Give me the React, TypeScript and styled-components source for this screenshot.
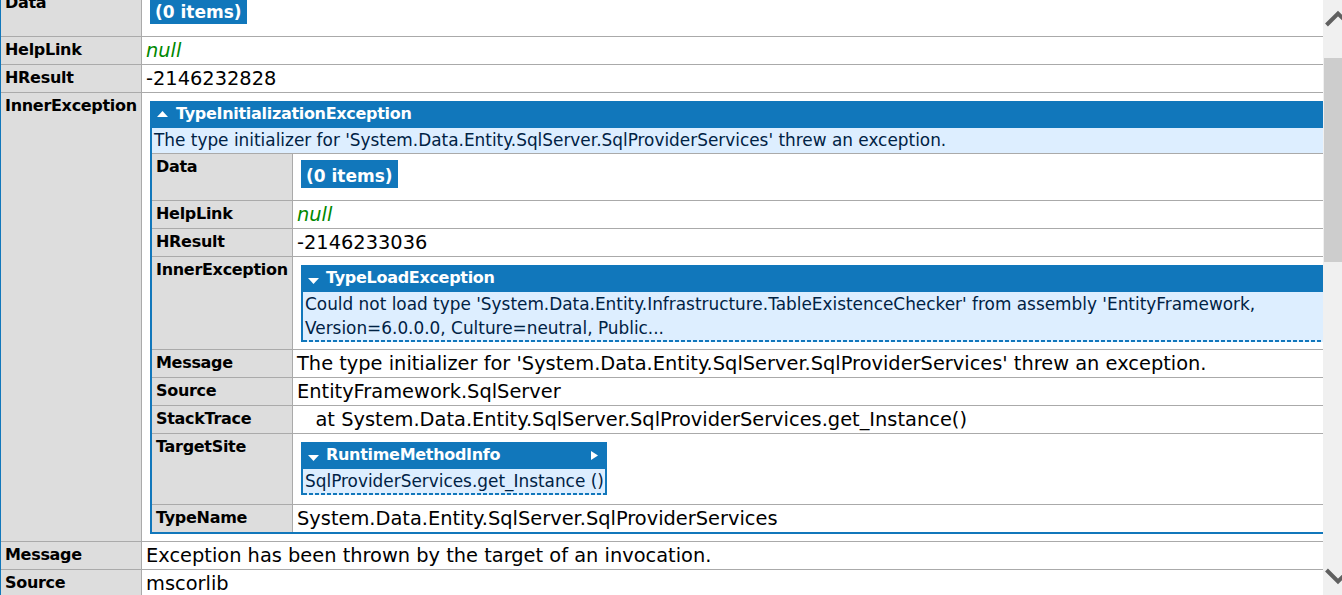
import styled, { createGlobalStyle } from "styled-components";

const BLUE = "#1177bb";

type ArrowDir = "up" | "down" | "right";

function Arrow({ dir }: { dir: ArrowDir }) {
  if (dir === "right") {
    return (
      <MoreArrow width="7" height="9" viewBox="0 0 7 9">
        <path d="M0 0 L7 4.5 L0 9 Z" fill="#fff" />
      </MoreArrow>
    );
  }
  return (
    <Toggle $dir={dir} width="11" height="6" viewBox="0 0 11 6">
      <path d={dir === "up" ? "M0 6 L5.5 0 L11 6 Z" : "M0 0 L5.5 6 L11 0 Z"} fill="#fff" />
    </Toggle>
  );
}

function TypeHeader({ title, dir, more }: { title: string; dir: ArrowDir; more?: boolean }) {
  return (
    <tr>
      <HeaderCell colSpan={2}>
        <HeaderRow>
          <Arrow dir={dir} />
          <span>{title}</span>
          {more && <Arrow dir="right" />}
        </HeaderRow>
      </HeaderCell>
    </tr>
  );
}

function App() {
  return (
    <>
      <GlobalStyle />
      <Page>
        <Viewport>
          <Scrolled>
            <RootTable>
              <tbody>
                <tr>
                  <Label>Data</Label>
                  <Value>
                    <ItemsBox>(0 items)</ItemsBox>
                  </Value>
                </tr>
                <tr>
                  <Label>HelpLink</Label>
                  <Value>
                    <Null>null</Null>
                  </Value>
                </tr>
                <tr>
                  <Label>HResult</Label>
                  <Value>-2146232828</Value>
                </tr>
                <tr>
                  <Label>InnerException</Label>
                  <Value>
                    <ObjTable $fill>
                      <tbody>
                        <TypeHeader dir="up" title="TypeInitializationException" />
                        <tr>
                          <Summary colSpan={2}>
                            The type initializer for 'System.Data.Entity.SqlServer.SqlProviderServices' threw an exception.
                          </Summary>
                        </tr>
                        <tr>
                          <Label>Data</Label>
                          <Value>
                            <ItemsBox>(0 items)</ItemsBox>
                          </Value>
                        </tr>
                        <tr>
                          <Label>HelpLink</Label>
                          <Value>
                            <Null>null</Null>
                          </Value>
                        </tr>
                        <tr>
                          <Label>HResult</Label>
                          <Value>-2146233036</Value>
                        </tr>
                        <tr>
                          <Label>InnerException</Label>
                          <Value>
                            <ObjTable $fill $collapsed>
                              <tbody>
                                <TypeHeader dir="down" title="TypeLoadException" />
                                <tr>
                                  <Summary colSpan={2} $collapsed>
                                    Could not load type 'System.Data.Entity.Infrastructure.TableExistenceChecker' from assembly 'EntityFramework,
                                    <br />
                                    Version=6.0.0.0, Culture=neutral, Public...
                                  </Summary>
                                </tr>
                              </tbody>
                            </ObjTable>
                          </Value>
                        </tr>
                        <tr>
                          <Label>Message</Label>
                          <Value>The type initializer for 'System.Data.Entity.SqlServer.SqlProviderServices' threw an exception.</Value>
                        </tr>
                        <tr>
                          <Label>Source</Label>
                          <Value>EntityFramework.SqlServer</Value>
                        </tr>
                        <tr>
                          <Label>StackTrace</Label>
                          <Value $pre>{"   at System.Data.Entity.SqlServer.SqlProviderServices.get_Instance()"}</Value>
                        </tr>
                        <tr>
                          <Label>TargetSite</Label>
                          <Value>
                            <ObjTable $collapsed>
                              <tbody>
                                <TypeHeader dir="down" title="RuntimeMethodInfo" more />
                                <tr>
                                  <Summary colSpan={2} $collapsed>
                                    SqlProviderServices.get_Instance ()
                                  </Summary>
                                </tr>
                              </tbody>
                            </ObjTable>
                          </Value>
                        </tr>
                        <tr>
                          <Label>TypeName</Label>
                          <Value>System.Data.Entity.SqlServer.SqlProviderServices</Value>
                        </tr>
                      </tbody>
                    </ObjTable>
                  </Value>
                </tr>
                <tr>
                  <Label>Message</Label>
                  <Value>Exception has been thrown by the target of an invocation.</Value>
                </tr>
                <tr>
                  <Label>Source</Label>
                  <Value>mscorlib</Value>
                </tr>
              </tbody>
            </RootTable>
          </Scrolled>
        </Viewport>

        <ScrollTrack>
          <Chevron width="30" height="22" viewBox="0 0 30 22" $pos="top">
            <polyline points="3.5,17 15,5.5 26.5,17" fill="none" stroke="#606060" strokeWidth="4" />
          </Chevron>
          <Thumb />
          <Spacer />
          <Chevron width="30" height="22" viewBox="0 0 30 22" $pos="bottom">
            <polyline points="3.5,6 15,17.5 26.5,6" fill="none" stroke="#606060" strokeWidth="4" />
          </Chevron>
        </ScrollTrack>
      </Page>
    </>
  );
}

export default App;


/*Styled Components*/

const GlobalStyle = createGlobalStyle`
  html, body {
    margin: 0;
    padding: 0;
    background: #fff;
    overflow: hidden;
  }
  body {
    font-family: "DejaVu Sans", Verdana, sans-serif;
    color: #000;
  }
`;

const Page = styled.div`
  display: flex;
  height: 595px;
  overflow: hidden;
`;

const Viewport = styled.div`
  flex: 1;
  min-width: 0;
  overflow: hidden;
`;

const Scrolled = styled.div`
  margin: -12px 0 0 -1px;
`;

const ObjTable = styled.table<{ $fill?: boolean; $collapsed?: boolean }>`
  border-collapse: separate;
  border-spacing: 0;
  border: 2px solid ${BLUE};
  border-bottom: ${(p) => (p.$collapsed ? "none" : `2px solid ${BLUE}`)};
  width: ${(p) => (p.$fill ? "calc(100% - 4px)" : "auto")};
  margin: 5px 0 ${(p) => (p.$fill ? "5px" : "7px")} 4px;

  & > tbody > tr:last-child > th,
  & > tbody > tr:last-child > td {
    border-bottom: none;
  }
`;

const RootTable = styled(ObjTable)`
  width: 1500px;
  margin: 0;
  border-bottom: none;
`;

const HeaderCell = styled.td`
  background: ${BLUE};
  color: #fff;
  font-weight: bold;
  font-size: 16px;
  letter-spacing: -0.3px;
  line-height: 22px;
  padding: 0 7px 3px 5px;
  white-space: nowrap;
`;

const HeaderRow = styled.div`
  display: flex;
  align-items: center;
  gap: 8px;
`;

const Toggle = styled.svg<{ $dir: ArrowDir }>`
  flex: none;
  margin-top: ${(p) => (p.$dir === "down" ? "5px" : "0")};
  margin-right: ${(p) => (p.$dir === "down" ? "-1px" : "0")};
`;

const MoreArrow = styled.svg`
  flex: none;
  margin-left: auto;
`;

const Summary = styled.td<{ $collapsed?: boolean }>`
  background-color: #ddeeff;
  color: #002244;
  font-size: 16.9px;
  line-height: 24px;
  padding: 0 1px 1px 2px;
  white-space: nowrap;
  border-bottom: 1px solid #aaaaaa;
  ${(p) =>
    p.$collapsed &&
    `
    padding-bottom: 2px;
    background-image: repeating-linear-gradient(to right, ${BLUE} 0 4px, transparent 4px 6px);
    background-size: 100% 2px;
    background-position: left bottom;
    background-repeat: no-repeat;
  `}
`;

const Label = styled.th`
  width: 141px;
  box-sizing: border-box;
  background: #dddddd;
  border-right: 1px solid #aaaaaa;
  border-bottom: 1px solid #aaaaaa;
  text-align: left;
  vertical-align: top;
  font-size: 16px;
  font-weight: bold;
  letter-spacing: -0.3px;
  line-height: 22px;
  padding: 2px 4px 0;
  white-space: nowrap;
`;

const Value = styled.td<{ $pre?: boolean }>`
  vertical-align: top;
  border-bottom: 1px solid #aaaaaa;
  font-size: 19.4px;
  line-height: 22px;
  padding: 3px 4px 2px;
  white-space: ${(p) => (p.$pre ? "pre" : "nowrap")};
`;

const Null = styled.span`
  color: #008800;
  font-style: italic;
`;

const ItemsBox = styled.div`
  width: fit-content;
  height: 28px;
  box-sizing: border-box;
  background: ${BLUE};
  color: #fff;
  font-weight: bold;
  font-size: 17px;
  line-height: 24px;
  padding: 4px 5px 0;
  margin: 3px 0 10px 4px;
`;

const ScrollTrack = styled.div`
  flex: none;
  width: 19px;
  height: 595px;
  background: #f0f0f0;
  display: flex;
  flex-direction: column;
  overflow: hidden;
`;

const Chevron = styled.svg<{ $pos: "top" | "bottom" }>`
  flex: none;
  display: block;
  margin: ${(p) => (p.$pos === "top" ? "8px 0 0" : "0 0 9px")};
`;

const Thumb = styled.div`
  flex: none;
  height: 204px;
  margin: 28px 0 0 1px;
  background: #cdcdcd;
`;

const Spacer = styled.div`
  flex: 1;
`;
